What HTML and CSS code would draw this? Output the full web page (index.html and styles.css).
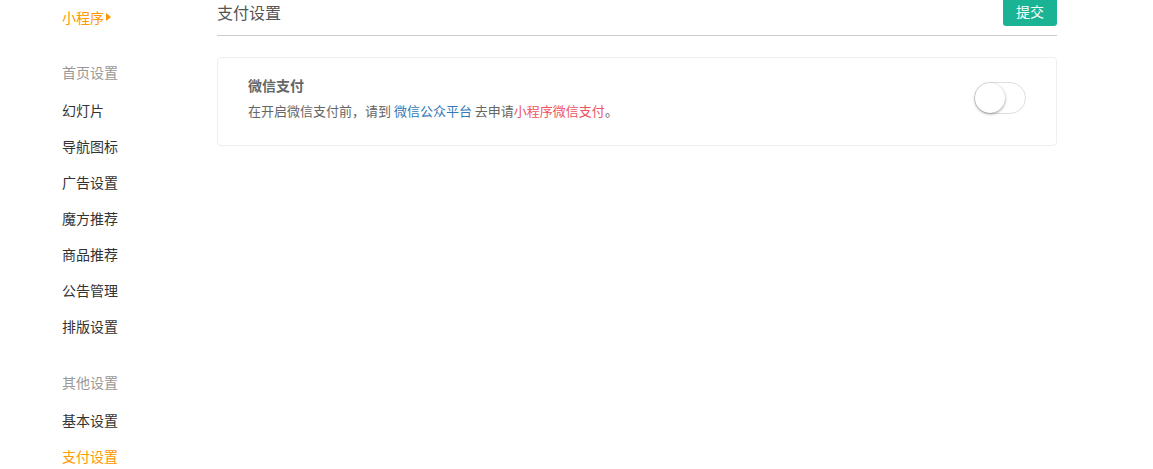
FILE: index.html
```html
<!DOCTYPE html>
<html lang="zh-CN">
<head>
    <meta charset="UTF-8">
    <title>支付设置</title>
    <link rel="stylesheet" href="styles.css">
</head>
<body>
    <div class="layout">
        <!-- 左侧菜单 -->
        <aside class="sidebar">
            <div class="app-name">小程序<span class="caret"></span></div>

            <div class="group-title">首页设置</div>
            <a class="nav-item">幻灯片</a>
            <a class="nav-item">导航图标</a>
            <a class="nav-item">广告设置</a>
            <a class="nav-item">魔方推荐</a>
            <a class="nav-item">商品推荐</a>
            <a class="nav-item">公告管理</a>
            <a class="nav-item">排版设置</a>

            <div class="group-title second">其他设置</div>
            <a class="nav-item">基本设置</a>
            <a class="nav-item active">支付设置</a>
        </aside>

        <!-- 主体内容 -->
        <main class="main">
            <div class="page-head">
                <h2 class="page-title">支付设置</h2>
                <button class="btn-submit">提交</button>
            </div>

            <div class="setting-card">
                <div class="setting-text">
                    <div class="setting-name">微信支付</div>
                    <p class="setting-desc">在开启微信支付前，请到 <a class="link-blue">微信公众平台</a> 去申请<span class="text-red">小程序微信支付</span>。</p>
                </div>
                <label class="switch">
                    <span class="switch-knob"></span>
                </label>
            </div>
        </main>
    </div>
</body>
</html>
```

FILE: styles.css
```css
body {
    margin: 0;
    padding: 0;
    font-family: "Noto Sans CJK SC", "Noto Sans", sans-serif;
    font-size: 14px;
    color: #333;
    background-color: #fff;
    overflow: hidden;
}

.layout {
    display: flex;
    margin-top: -4px;
}

.sidebar {
    width: 155px;
    padding-left: 62px;
    display: flex;
    flex-direction: column;
}

.app-name {
    color: #ff9900;
    font-size: 14px;
    line-height: 18px;
    margin-top: 12px;
    display: flex;
    align-items: center;
}

.caret {
    display: inline-block;
    width: 0;
    height: 0;
    margin-left: 2px;
    border-top: 4px solid transparent;
    border-bottom: 4px solid transparent;
    border-left: 5px solid #ff9900;
}

.group-title {
    color: #999;
    font-size: 14px;
    line-height: 18px;
    margin-top: 37px;
    margin-bottom: 20px;
}

.group-title.second {
    margin-top: 20px;
}

.nav-item {
    color: #333;
    font-size: 14px;
    line-height: 18px;
    margin-bottom: 18px;
    text-decoration: none;
}

.nav-item.active {
    color: #ff9900;
}

.main {
    width: 840px;
}

.page-head {
    display: flex;
    justify-content: space-between;
    align-items: flex-start;
    height: 39px;
    border-bottom: 1px solid #cccccc;
}

.page-title {
    margin: 5px 0 0;
    font-size: 16px;
    font-weight: normal;
    line-height: 22px;
    color: #555;
}

.btn-submit {
    height: 30px;
    padding: 0 13px;
    background-color: #1ab394;
    color: #fff;
    border: none;
    border-radius: 3px;
    font-family: inherit;
    font-size: 14px;
    cursor: pointer;
}

.setting-card {
    margin-top: 21px;
    height: 87px;
    border: 1px solid #eeeeee;
    border-radius: 4px;
    display: flex;
    align-items: center;
    justify-content: space-between;
    padding: 0 30px;
}

.setting-text {
    margin-top: -8px;
}

.setting-name {
    font-size: 14px;
    font-weight: bold;
    color: #666;
    line-height: 18px;
}

.setting-desc {
    margin: 8px 0 0;
    font-size: 13px;
    line-height: 18px;
    color: #666;
}

.link-blue {
    color: #337ab7;
    text-decoration: none;
}

.text-red {
    color: #ed5565;
}

.switch {
    position: relative;
    width: 50px;
    height: 30px;
    border: 1px solid #dfdfdf;
    border-radius: 16px;
    background-color: #fff;
    margin-top: -8px;
}

.switch-knob {
    position: absolute;
    left: 0;
    top: 0;
    width: 30px;
    height: 30px;
    border-radius: 50%;
    background-color: #fff;
    box-shadow: 0 1px 3px rgba(0, 0, 0, 0.4);
}
```
